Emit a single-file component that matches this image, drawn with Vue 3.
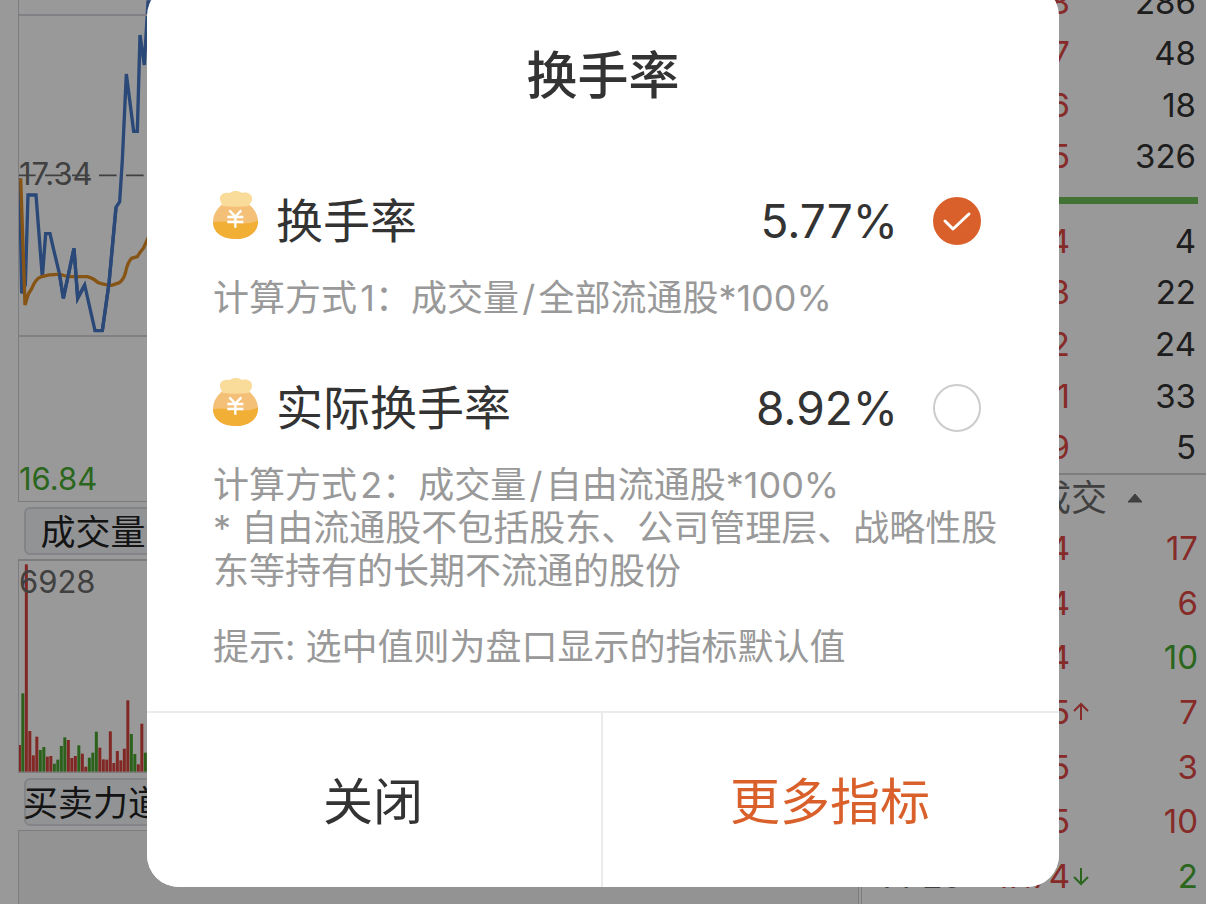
<script setup>
import { ref } from 'vue'

const selected = ref('turnover')

const options = [
  {
    id: 'turnover',
    name: '换手率',
    value: '5.77%',
    notes: ['计算方式\u200a1：成交量\u200a/\u200a全部流通股*100%'],
  },
  {
    id: 'actual',
    name: '实际换手率',
    value: '8.92%',
    notes: [
      '计算方式\u200a2：成交量\u200a/\u200a自由流通股*100%',
      '* 自由流通股不包括股东、公司管理层、战略性股东等持有的长期不流通的股份',
    ],
  },
]

const asks = [
  ['17.78', 286],
  ['17.77', 48],
  ['17.76', 18],
  ['17.75', 326],
]
const bids = [
  ['17.74', 4],
  ['17.73', 22],
  ['17.72', 24],
  ['17.71', 33],
  ['17.69', 5],
]
const trades = [
  { price: '17.74', volume: 17, side: 'up' },
  { price: '17.74', volume: 6, side: 'up' },
  { price: '17.74', volume: 10, side: 'down' },
  { price: '17.75', volume: 7, side: 'up', move: 'up' },
  { price: '17.75', volume: 3, side: 'up' },
  { price: '17.75', volume: 10, side: 'up' },
  { time: '14:29', price: '17.74', volume: 2, side: 'down', move: 'down' },
]

const volumes =
  'r80 g235 r622 r122 r49 r105 g65 g74 r45 r47 g24 g36 g77 g103 r95 r41 r47 g79 r54 r15 g42 g57 g120 r72 r37 r36 r121 r26 r62 r34 r69 r214 g113 g53 r22 r144 g57'
    .split(' ')
    .map((v, i) => ({
      up: v[0] === 'r',
      h: Number(v.slice(1)),
      x: i === 0 ? 0 : 7 + (i - 1) * 10.5,
      w: i === 0 ? 6 : 9,
    }))
</script>

<template>
  <div class="screen">
    <main class="market">
      <section class="charts">
        <div class="panel price">
          <svg class="plot" viewBox="0 0 450 1500" width="150" height="500" aria-hidden="true">
            <path d="M-3 526H450" fill="none" stroke="#6b6b6b" stroke-width="5" stroke-dasharray="53 28" />
            <g transform="translate(-57 0)" fill="none" stroke-width="10">
              <path stroke="#4678c8" d="M59 535L65 880L76 855L84 585H108L127 832L137 701H150L160 745L178 820L190 895L222 745L233 895L254 855L285 992H307L327 850L348 622L359 605L367 480L379 222L401 394H412L420 105L433 195L444 6H470" />
              <path stroke="#e08c24" d="M62 535L75 915L85 882L95 866Q108 834 125 830Q150 822 180 823Q195 830 215 830H262Q280 834 295 848Q320 856 335 856L358 848Q370 840 376 820Q383 785 395 775L412 770Q420 755 430 745L446 710" />
              <path stroke="#4678c8" d="M178 820L190 895L222 745L233 895L254 855M307 992L327 850L348 622" />
            </g>
          </svg>
          <hr class="grid-line upper" />
          <hr class="grid-line lower" />
          <span class="mark middle">17.34</span>
          <span class="mark low">16.84</span>
        </div>
        <button class="metric" type="button">成交量</button>
        <div class="panel volume">
          <svg class="plot" viewBox="0 0 450 633" width="150" height="211" aria-hidden="true">
            <rect
              v-for="(bar, i) in volumes"
              :key="i"
              :x="bar.x"
              :y="632 - bar.h"
              :width="bar.w"
              :height="bar.h"
              :fill="bar.up ? '#d8443c' : '#48a22e'"
            />
          </svg>
          <span class="mark peak">6928</span>
        </div>
        <button class="metric" type="button">买卖力道</button>
        <div class="panel force"></div>
      </section>

      <section class="book">
        <div class="levels asks">
          <div v-for="row in asks" :key="row[0]" class="level">
            <span class="price-cell">{{ row[0] }}</span><span>{{ row[1] }}</span>
          </div>
        </div>
        <div class="ratio"></div>
        <div class="levels bids">
          <div v-for="row in bids" :key="row[0]" class="level">
            <span class="price-cell">{{ row[0] }}</span><span>{{ row[1] }}</span>
          </div>
        </div>
        <div class="trades-head">
          <span>成交</span>
          <svg width="16" height="12" viewBox="0 0 16 12" aria-hidden="true"><path d="M8 2L15 10H1Z" fill="#6b6b6b" stroke="#6b6b6b" stroke-linejoin="round" /></svg>
        </div>
        <div class="trades">
          <div v-for="(t, i) in trades" :key="i" class="trade">
            <span class="time">{{ t.time }}</span>
            <span class="price-cell">{{ t.price }}</span>
            <span class="move" :class="t.move">
              <svg v-if="t.move" width="16" height="20" viewBox="0 0 16 20" fill="none" stroke="currentColor" stroke-width="2" aria-hidden="true">
                <path v-if="t.move === 'up'" d="M8 18V2M1 9L8 2L15 9" />
                <path v-else d="M8 2V18M1 11L8 18L15 11" />
              </svg>
            </span>
            <span class="amount" :class="t.side">{{ t.volume }}</span>
          </div>
        </div>
      </section>
    </main>

    <div class="mask"></div>

    <section class="dialog" role="dialog" aria-labelledby="dialog-title">
      <div class="content">
        <h1 id="dialog-title">换手率</h1>
        <div v-for="o in options" :key="o.id" class="option">
          <label class="choice">
            <svg class="bag" viewBox="0 0 135 144" width="45" height="48" aria-hidden="true">
              <path d="M30 38C12 52 0 70 0 92C0 124 27 144 68 144C108 144 135 124 135 92C135 70 123 52 105 38Z" fill="#f4c078" />
              <path d="M0 94C27 89 43 93 68 96C96 99 115 98 135 88C136 122 109 144 68 144C27 144 0 124 0 94Z" fill="#f2af35" />
              <path d="M29 45C28 38 21 34 21 23C20 9 36 2 51 6C59-2 77-2 86 6C99 2 118 8 117 22C118 34 110 36 108 45Q68 50 29 45Z" fill="#f9dc9a" />
              <path d="M49 58L67 77L85 58M43 78H91M43 93H91M67 77V110" fill="none" stroke="#fff" stroke-width="7" />
            </svg>
            <span class="name">{{ o.name }}</span>
            <span class="value">{{ o.value }}</span>
            <span class="tick">
              <input v-model="selected" type="radio" name="indicator" :value="o.id" />
              <svg v-if="selected === o.id" viewBox="0 0 48 48" width="48" height="48" aria-hidden="true">
                <path d="M12 24L20 32L36 17" fill="none" stroke="#fff" stroke-width="3" stroke-linecap="round" stroke-linejoin="round" />
              </svg>
            </span>
          </label>
          <p v-for="n in o.notes" :key="n" class="note">{{ n }}</p>
        </div>
        <p class="note hint">提示: 选中值则为盘口显示的指标默认值</p>
      </div>
      <footer class="actions">
        <button type="button">关闭</button>
        <button type="button" class="primary">更多指标</button>
      </footer>
    </section>
  </div>
</template>

<style>
body {
  overflow: hidden;
}
</style>

<style scoped>
.screen {
  position: relative;
  height: 100vh;
  overflow: hidden;
  background: #fff;
  color: #333;
  font-family: Inter, "Noto Sans CJK SC", sans-serif;
}
button {
  font-family: inherit;
  cursor: pointer;
}
.market {
  display: grid;
  grid-template-columns: minmax(0, 1fr) 345px;
  height: 100%;
}
.charts {
  display: flex;
  flex-direction: column;
  padding-left: 18px;
  padding-right: 2px;
}
.panel {
  position: relative;
  box-sizing: border-box;
  border: 1px solid #cfcfd4;
}
.price {
  height: 502px;
  border-top: 0;
}
.plot {
  display: block;
}
.grid-line {
  position: absolute;
  left: 0;
  right: 0;
  margin: 0;
  border: 0;
  border-top: 2px solid #d8d8de;
}
.upper {
  top: 14px;
}
.lower {
  top: 335px;
}
.mark {
  position: absolute;
  left: 0;
  font-size: 31px;
  line-height: 36px;
  color: #6b6b6b;
}
.middle {
  top: 156px;
}
.low {
  bottom: 4px;
  color: #48aa32;
}
.peak {
  top: 3px;
}
.metric {
  box-sizing: border-box;
  width: 138px;
  height: 48px;
  margin: 5px 0 4px 6px;
  padding: 0;
  border: 2px solid #d9dce2;
  border-radius: 6px;
  background: #f3f5f8;
  color: #222;
  font-size: 35px;
  line-height: 46px;
  white-space: nowrap;
  display: flex;
  justify-content: center;
}
.volume {
  height: 214px;
  border-top-width: 2px;
}
.force {
  flex: 1;
  border-bottom: 0;
  background: #f6f6f6;
}
.book {
  display: flex;
  flex-direction: column;
  border-left: 1px solid #cfcfd4;
  font-size: 33px;
}
.levels {
  display: grid;
  grid-auto-rows: 1fr;
  padding-right: 10px;
}
.asks {
  height: 206px;
  margin-top: -24px;
}
.bids {
  height: 258px;
  margin-top: 11px;
}
.level {
  display: grid;
  grid-template-columns: 208px 1fr;
  align-items: center;
  text-align: right;
}
.price-cell {
  color: #df4843;
  text-align: right;
}
.ratio {
  height: 7px;
  margin-top: 15px;
  margin-right: 8px;
  background: #6ebe58;
}
.trades-head {
  display: flex;
  align-items: center;
  gap: 20px;
  height: 46px;
  padding-left: 173px;
  border-top: 2px solid #d2d2d2;
  color: #6b6b6b;
  font-size: 36px;
  line-height: 46px;
}
.trades {
  display: grid;
  grid-auto-rows: 1fr;
  height: 382px;
  padding-right: 8px;
}
.trade {
  display: grid;
  grid-template-columns: 108px 100px 24px 1fr;
  align-items: center;
}
.time {
  padding-left: 16px;
  color: #6b6b6b;
}
.move {
  padding-left: 3px;
  line-height: 20px;
}
.move svg {
  display: block;
}
.amount {
  text-align: right;
}
.up {
  color: #df4843;
}
.down {
  color: #48aa32;
}
.mask {
  position: absolute;
  inset: 0;
  background: rgba(0, 0, 0, 0.4);
}
.dialog {
  position: absolute;
  top: -16px;
  left: 147px;
  right: 147px;
  overflow: hidden;
  border-radius: 32px;
  background: #fff;
}
.content {
  padding: 62px 54px 42px 66px;
}
h1 {
  margin: 0 12px 85px 0;
  font-size: 51px;
  font-weight: 500;
  line-height: 60px;
  text-align: center;
}
.option {
  margin-bottom: 58px;
}
.option:last-of-type {
  margin-bottom: 33px;
}
.choice {
  display: flex;
  align-items: center;
  height: 60px;
  margin-bottom: 26px;
  padding-right: 24px;
  font-size: 47px;
  line-height: 60px;
  cursor: pointer;
}
.bag {
  margin-top: -12px;
  margin-right: 18px;
}
.value {
  margin-left: auto;
  margin-right: 35px;
  font-size: 46px;
}
.tick {
  position: relative;
  width: 48px;
  height: 48px;
}
.tick input {
  appearance: none;
  display: block;
  box-sizing: border-box;
  width: 48px;
  height: 48px;
  margin: 0;
  border: 2px solid #ccc;
  border-radius: 50%;
  background: #fff;
}
.tick input:checked {
  border-color: #d9602a;
  background: #d9602a;
}
.tick svg {
  position: absolute;
  inset: 0;
  pointer-events: none;
}
.note {
  margin: 0;
  color: #999;
  font-size: 36px;
  line-height: 43px;
}
.actions {
  display: grid;
  grid-template-columns: 1fr 1fr;
  border-top: 2px solid #ebebeb;
}
.actions button {
  height: 174px;
  padding: 0 2px 4px 0;
  border: 0;
  background: #fff;
  color: #333;
  font-size: 50px;
}
.actions button:first-child {
  border-right: 2px solid #ebebeb;
}
.actions .primary {
  color: #d9602a;
}
</style>
